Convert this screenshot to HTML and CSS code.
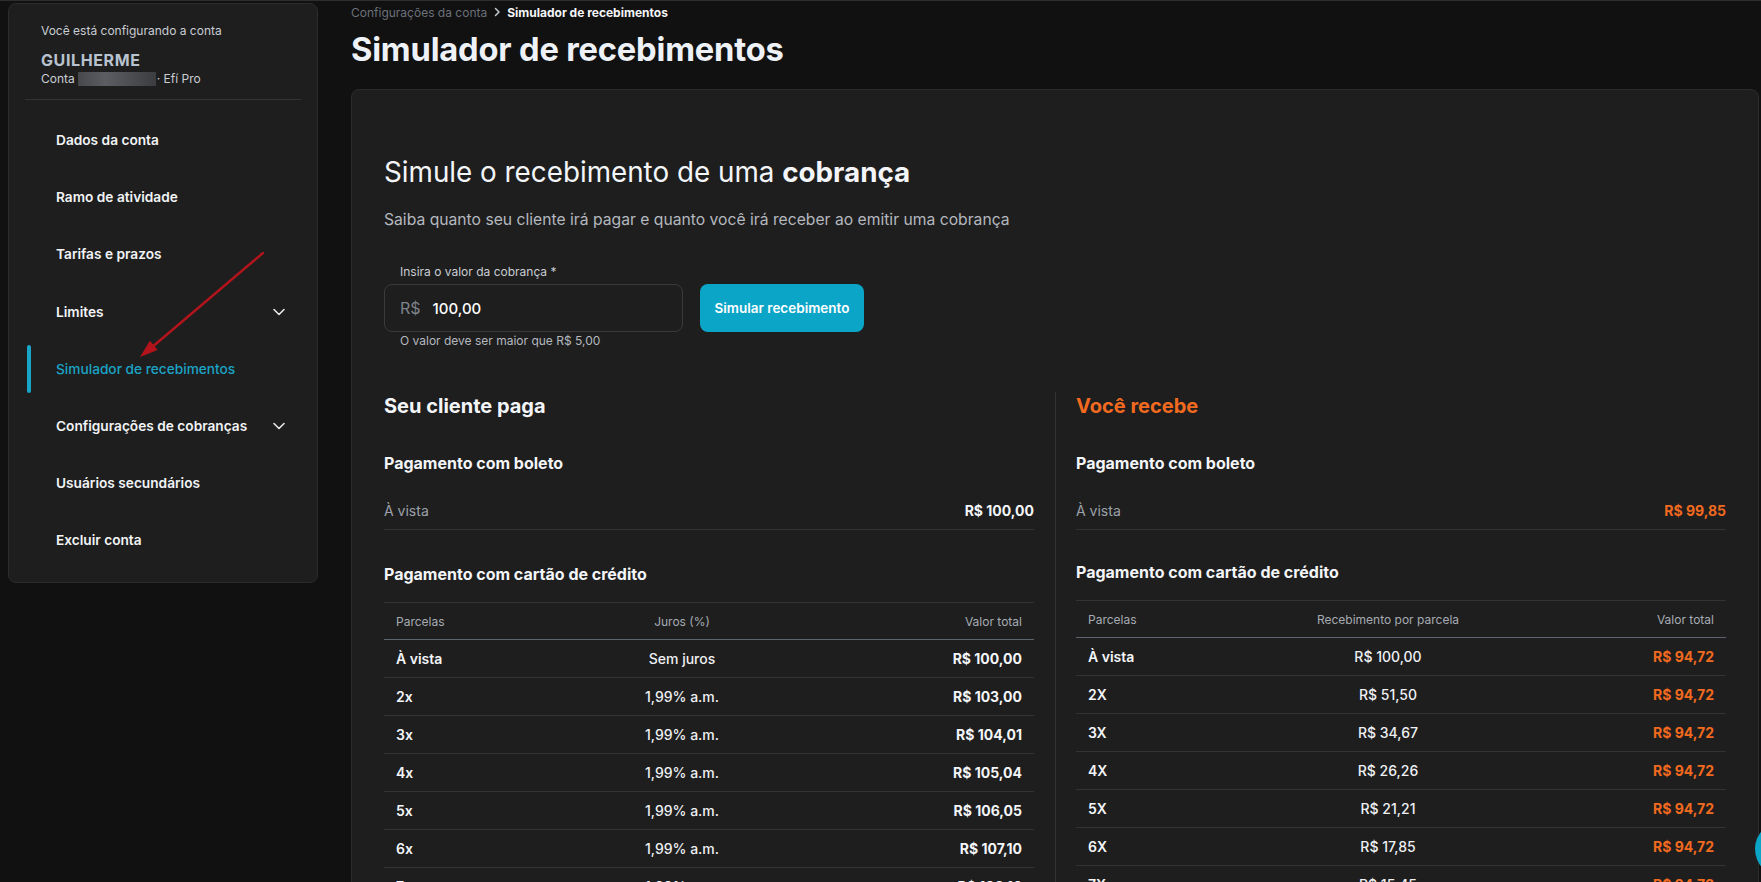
FILE: index.html
```html
<!DOCTYPE html>
<html lang="pt-BR">
<head>
<meta charset="utf-8">
<title>Simulador de recebimentos</title>
<link rel="stylesheet" href="styles.css">
</head>
<body>
<div class="page">
  <aside class="sidebar">
    <div class="account">
      <p class="account-label">Você está configurando a conta</p>
      <p class="account-name">GUILHERME</p>
      <p class="account-meta">Conta<span class="redacted"></span>· Efí Pro</p>
    </div>
    <nav class="nav">
      <a class="nav-item">Dados da conta</a>
      <a class="nav-item">Ramo de atividade</a>
      <a class="nav-item">Tarifas e prazos</a>
      <a class="nav-item">Limites <svg class="chev" width="12" height="8" viewBox="0 0 12 8"><path d="M1 1.5l5 5 5-5" fill="none" stroke="#e5e7eb" stroke-width="1.6" stroke-linecap="round" stroke-linejoin="round"/></svg></a>
      <a class="nav-item active">Simulador de recebimentos</a>
      <a class="nav-item">Configurações de cobranças <svg class="chev" width="12" height="8" viewBox="0 0 12 8"><path d="M1 1.5l5 5 5-5" fill="none" stroke="#e5e7eb" stroke-width="1.6" stroke-linecap="round" stroke-linejoin="round"/></svg></a>
      <a class="nav-item">Usuários secundários</a>
      <a class="nav-item">Excluir conta</a>
    </nav>
  </aside>

  <main class="main">
    <div class="breadcrumb">
      <span class="crumb">Configurações da conta</span>
      <svg class="crumb-sep" width="8" height="10" viewBox="0 0 8 10"><path d="M2.5 1.5l3.5 3.5-3.5 3.5" fill="none" stroke="#c4c8cf" stroke-width="1.5" stroke-linecap="round" stroke-linejoin="round"/></svg>
      <span class="crumb current">Simulador de recebimentos</span>
    </div>
    <h1 class="title">Simulador de recebimentos</h1>

    <section class="card">
      <h2 class="sim-title">Simule o recebimento de uma <strong>cobrança</strong></h2>
      <p class="sim-sub">Saiba quanto seu cliente irá pagar e quanto você irá receber ao emitir uma cobrança</p>

      <div class="form">
        <div class="field">
          <label class="field-label">Insira o valor da cobrança *</label>
          <div class="input"><span class="prefix">R$</span><span class="value">100,00</span></div>
          <p class="hint">O valor deve ser maior que R$ 5,00</p>
        </div>
        <button class="btn">Simular recebimento</button>
      </div>

      <div class="columns">
        <div class="col">
          <h3 class="col-title">Seu cliente paga</h3>
          <h4 class="sec-title">Pagamento com boleto</h4>
          <div class="boleto-row"><span class="muted">À vista</span><span class="amount">R$ 100,00</span></div>
          <h4 class="sec-title card-title">Pagamento com cartão de crédito</h4>
          <div class="table table-pay">
            <div class="thead"><span>Parcelas</span><span class="c">Juros (%)</span><span class="r">Valor total</span></div>
            <div class="tr"><span class="p">À vista</span><span class="c m">Sem juros</span><span class="r amount">R$ 100,00</span></div>
            <div class="tr"><span class="p">2x</span><span class="c m">1,99% a.m.</span><span class="r amount">R$ 103,00</span></div>
            <div class="tr"><span class="p">3x</span><span class="c m">1,99% a.m.</span><span class="r amount">R$ 104,01</span></div>
            <div class="tr"><span class="p">4x</span><span class="c m">1,99% a.m.</span><span class="r amount">R$ 105,04</span></div>
            <div class="tr"><span class="p">5x</span><span class="c m">1,99% a.m.</span><span class="r amount">R$ 106,05</span></div>
            <div class="tr"><span class="p">6x</span><span class="c m">1,99% a.m.</span><span class="r amount">R$ 107,10</span></div>
            <div class="tr"><span class="p">7x</span><span class="c m">1,99% a.m.</span><span class="r amount">R$ 108,16</span></div>
          </div>
        </div>

        <div class="col col-right">
          <h3 class="col-title orange">Você recebe</h3>
          <h4 class="sec-title">Pagamento com boleto</h4>
          <div class="boleto-row"><span class="muted">À vista</span><span class="amount orange">R$ 99,85</span></div>
          <h4 class="sec-title card-title tight">Pagamento com cartão de crédito</h4>
          <div class="table table-recv">
            <div class="thead"><span>Parcelas</span><span class="c">Recebimento por parcela</span><span class="r">Valor total</span></div>
            <div class="tr"><span class="p">À vista</span><span class="c m">R$ 100,00</span><span class="r amount orange">R$ 94,72</span></div>
            <div class="tr"><span class="p">2X</span><span class="c m">R$ 51,50</span><span class="r amount orange">R$ 94,72</span></div>
            <div class="tr"><span class="p">3X</span><span class="c m">R$ 34,67</span><span class="r amount orange">R$ 94,72</span></div>
            <div class="tr"><span class="p">4X</span><span class="c m">R$ 26,26</span><span class="r amount orange">R$ 94,72</span></div>
            <div class="tr"><span class="p">5X</span><span class="c m">R$ 21,21</span><span class="r amount orange">R$ 94,72</span></div>
            <div class="tr"><span class="p">6X</span><span class="c m">R$ 17,85</span><span class="r amount orange">R$ 94,72</span></div>
            <div class="tr"><span class="p">7X</span><span class="c m">R$ 15,45</span><span class="r amount orange">R$ 94,72</span></div>
          </div>
        </div>
      </div>
    </section>
  </main>
</div>

<svg class="annotation" width="300" height="380" viewBox="0 0 300 380">
  <line x1="263" y1="253" x2="151" y2="348" stroke="#b3141c" stroke-width="2.4" stroke-linecap="round"/>
  <polygon points="140,357 157.6,350 149.9,340.8" fill="#b3141c"/>
</svg>
<div class="chat-bubble"></div>
</body>
</html>
```

FILE: styles.css
```css
* { box-sizing: border-box; }

html, body {
  margin: 0;
  height: 882px;
  overflow: hidden;
}

body {
  background: #111111;
  border-top: 1px solid #2e2e2e;
  font-family: Inter, "Noto Sans", "Liberation Sans", sans-serif;
  color: #f1f3f5;
}

p, h1, h2, h3, h4 { margin: 0; }

.page {
  display: flex;
  gap: 33px;
  padding: 2px 2px 0 8px;
}

/* Sidebar */
.sidebar {
  width: 310px;
  flex: none;
  align-self: flex-start;
  background: #1e1e1e;
  border: 1px solid #2c2c2c;
  border-radius: 8px;
  padding: 0 16px 18px;
}

.account {
  padding: 19px 16px 12px;
  border-bottom: 1px solid #333333;
}

.account-label {
  font-size: 12px;
  line-height: 16px;
  color: #c9cdd4;
}

.account-name {
  margin-top: 11px;
  font-size: 16px;
  line-height: 20px;
  font-weight: 700;
  color: #b9c2cf;
  letter-spacing: 0.6px;
}

.account-meta {
  margin-top: 1px;
  font-size: 12px;
  line-height: 16px;
  color: #c9cdd4;
  display: flex;
  align-items: center;
  white-space: pre;
}

.redacted {
  display: inline-block;
  width: 78px;
  height: 14px;
  margin: 0 1px 0 3px;
  background: linear-gradient(90deg, #46484c, #5b5d62 35%, #4a4c50 70%, #3b3d41);
}

.nav {
  display: flex;
  flex-direction: column;
  gap: 9.2px;
  padding-top: 16px;
}

.nav-item {
  position: relative;
  height: 48px;
  display: flex;
  align-items: center;
  justify-content: space-between;
  padding: 0 16px 0 31px;
  font-size: 13.7px;
  font-weight: 600;
  color: #f1f3f5;
}

.nav-item.active {
  color: #1ba3c6;
  font-weight: 500;
}

.nav-item.active::before {
  content: "";
  position: absolute;
  left: 2px;
  top: 0;
  width: 4px;
  height: 48px;
  border-radius: 2px;
  background: #17a6c8;
}

/* Main */
.main {
  flex: 1;
  min-width: 0;
}

.breadcrumb {
  display: flex;
  align-items: center;
  gap: 4px;
  height: 18px;
  font-size: 12px;
}

.crumb { color: #6b7079; }

.crumb.current {
  color: #f5f6f7;
  font-weight: 700;
  font-size: 12px;
}

.crumb-sep { margin: 0 2px; }

.title {
  margin-top: 8px;
  font-size: 32.7px;
  line-height: 40px;
  font-weight: 700;
  color: #eef2f7;
  letter-spacing: -0.2px;
}

.card {
  margin-top: 20px;
  background: #1e1e1e;
  border: 1px solid #2c2c2c;
  border-radius: 8px;
  padding: 64px 32px 40px;
}

.sim-title {
  font-size: 27.8px;
  line-height: 36px;
  font-weight: 400;
  color: #f3f5f8;
}

.sim-title strong { font-weight: 700; }

.sim-sub {
  margin-top: 18px;
  font-size: 15.7px;
  line-height: 24px;
  color: #b4b8bf;
}

.form {
  margin-top: 32px;
  display: flex;
  align-items: flex-start;
  gap: 17px;
}

.field { width: 299px; }

.field-label {
  display: block;
  padding-left: 16px;
  font-size: 12px;
  line-height: 16px;
  color: #c9cdd4;
}

.input {
  margin-top: 4px;
  height: 48px;
  border: 1px solid #3a3a3a;
  border-radius: 8px;
  display: flex;
  align-items: center;
  gap: 12px;
  padding: 0 15px;
}

.prefix {
  font-size: 16px;
  color: #7d8289;
}

.value {
  font-size: 15px;
  font-weight: 500;
  color: #ffffff;
}

.hint {
  margin-top: 1px;
  padding-left: 16px;
  font-size: 12px;
  line-height: 16px;
  color: #b4b8bf;
}

.btn {
  margin-top: 20px;
  width: 164px;
  height: 48px;
  border: none;
  border-radius: 8px;
  background: #0ba5c8;
  color: #ffffff;
  font-family: inherit;
  font-size: 13.5px;
  font-weight: 600;
}

/* Columns */
.columns {
  margin-top: 43px;
  display: grid;
  grid-template-columns: 1fr 1fr;
}

.col { padding-right: 21px; }

.col-right {
  border-left: 1px solid #333333;
  padding: 0 0 0 20px;
}

.col-title {
  font-size: 20px;
  line-height: 28px;
  font-weight: 700;
  color: #f3f5f8;
}

.orange { color: #f26a1f !important; }

.sec-title {
  margin-top: 31px;
  font-size: 16px;
  line-height: 24px;
  font-weight: 700;
  color: #f3f5f8;
}

.sec-title.card-title { margin-top: 32px; }
.sec-title.card-title.tight { margin-top: 30px; }

.boleto-row {
  margin-top: 14px;
  display: flex;
  justify-content: space-between;
  padding: 12px 0 8px;
  border-bottom: 1px solid #333333;
  font-size: 14px;
  line-height: 20px;
}

.muted { color: #9ca1a9; }

.amount {
  font-weight: 700;
  color: #f3f5f8;
}

.table {
  margin-top: 16px;
  border-top: 1px solid #333333;
}

.thead,
.tr {
  display: grid;
  align-items: center;
  padding: 0 12px;
}

.table-pay .thead,
.table-pay .tr { grid-template-columns: 196px 180px 1fr; }

.table-recv .thead,
.table-recv .tr { grid-template-columns: 210px 180px 1fr; }

.thead {
  height: 37px;
  border-bottom: 1px solid #5d6470;
  font-size: 12px;
  color: #a6abb3;
}

.tr {
  height: 38px;
  border-bottom: 1px solid #333333;
  font-size: 14px;
  line-height: 20px;
}

.c { text-align: center; white-space: nowrap; }
.r { text-align: right; white-space: nowrap; }

.p {
  font-weight: 600;
  color: #f3f5f8;
}

.m {
  font-weight: 500;
  color: #eef0f3;
}

/* Overlays */
.annotation {
  position: absolute;
  left: 0;
  top: 0;
  pointer-events: none;
}

.chat-bubble {
  position: absolute;
  left: 1755px;
  top: 821px;
  width: 56px;
  height: 56px;
  border-radius: 50%;
  background: #0ba5c8;
}
```
